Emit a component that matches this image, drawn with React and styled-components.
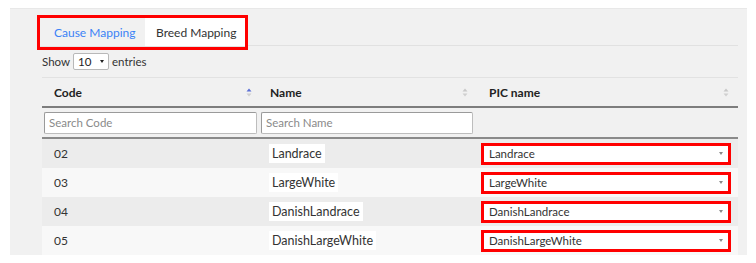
import React from "react";
import styled, { createGlobalStyle } from "styled-components";

const Global = createGlobalStyle`
  html, body { margin: 0; padding: 0; background: #ffffff; }
  body { font-family: Lato, "Open Sans", sans-serif; color: #333; }
  * { box-sizing: border-box; }
`;

const Panel = styled.div`
  margin: 8px 9px 0 10px;
  width: 737px;
  height: 247px;
  background: #f1f1f1;
  border-top: 1px solid #e8e8e8;
  padding: 6px 9px 0 32px;
  overflow: hidden;
`;

const TabBar = styled.div`
  display: flex;
  align-items: flex-start;
`;

const TabGroup = styled.div`
  display: flex;
  margin-left: -5px;
  border: 3px solid #ff0000;
  height: 35px;
`;

const Tab = styled.div`
  display: flex;
  align-items: center;
  height: 29px;
  width: ${p => p.$w}px;
  padding-left: ${p => p.$pl}px;
  font-size: 12px;
  color: ${p => (p.$active ? "#3b82f6" : "#333")};
  background: ${p => (p.$active ? "#f1f1f1" : "#ffffff")};
  border-bottom: 1px solid #e3e3e3;
`;

const BarLine = styled.div`
  flex: 1;
  height: 31px;
  border-bottom: 1px solid #e1e1e1;
`;

const LengthRow = styled.div`
  display: flex;
  align-items: center;
  gap: 3px;
  height: 17px;
  margin-top: 3px;
  font-size: 11.5px;
  color: #333;
`;

const LenSelect = styled.div`
  width: 36px;
  height: 17px;
  background: #fff;
  border: 1px solid #b8b8b8;
  border-radius: 2px;
  display: flex;
  align-items: center;
  justify-content: space-between;
  padding: 0 4px 0 4px;
  font-size: 11.5px;
  color: #222;
`;

const Caret = styled.span`
  display: inline-block;
  width: 0;
  height: 0;
  border-left: ${p => p.$s}px solid transparent;
  border-right: ${p => p.$s}px solid transparent;
  border-top: ${p => p.$s + 1}px solid ${p => p.$c};
`;

const Table = styled.div`
  margin-top: 7px;
  width: 696px;
  border-top: 1px solid #e2e2e2;
`;

const Row = styled.div`
  display: grid;
  grid-template-columns: 216px 220px 260px;
  height: ${p => p.$h}px;
  background: ${p => p.$bg || "transparent"};
  border-bottom: ${p => p.$bb || "none"};
  align-items: center;
`;

const HeadCell = styled.div`
  display: flex;
  align-items: center;
  justify-content: space-between;
  padding: 0 ${p => p.$pr}px 0 ${p => p.$pl}px;
  font-size: 12px;
  font-weight: 700;
  color: #222;
`;

const FilterCell = styled.div`
  padding-left: ${p => p.$pl}px;
`;

const SearchInput = styled.input`
  width: ${p => p.$w}px;
  height: 22px;
  border: 1px solid #bdbdbd;
  border-top-color: #9a9a9a;
  border-left-color: #9a9a9a;
  border-radius: 2px;
  background: #fff;
  padding: 0 4px;
  font-family: Lato, "Open Sans", sans-serif;
  font-size: 11.5px;
  color: #333;
  outline: none;
  &::placeholder { color: #8a8a8a; }
`;

const Cell = styled.div`
  padding-left: ${p => p.$pl}px;
  font-size: 12px;
  color: #333;
`;

const NameBox = styled.span`
  display: inline-block;
  background: #ffffff;
  padding: 2px 3px;
  font-size: 12.5px;
  color: #333;
`;

const PicSelect = styled.div`
  width: 250px;
  height: 22px;
  margin-left: 3px;
  border: 3px solid #ff0000;
  background: #fff;
  display: flex;
  align-items: center;
  justify-content: space-between;
  padding: 0 5px 0 5px;
  font-size: 11.5px;
  color: #333;
`;

const SortIcon = ({ active }) => (
  <svg width="6" height="9" viewBox="0 0 6 9">
    <path d="M3 0.5 L5.5 3.5 L0.5 3.5 Z" fill={active ? "#5b6fd6" : "#c8c8c8"} />
    <path d="M3 8.5 L5.5 5.5 L0.5 5.5 Z" fill="#d0d0d0" />
  </svg>
);

const rows = [
  { code: "02", name: "Landrace", bg: "#ececec" },
  { code: "03", name: "LargeWhite", bg: "#f8f8f8" },
  { code: "04", name: "DanishLandrace", bg: "#ececec" },
  { code: "05", name: "DanishLargeWhite", bg: "#f8f8f8" },
];

export default function App() {
  return (
    <>
      <Global />
      <Panel>
        <TabBar>
          <TabGroup>
            <Tab $active $w={105} $pl={14}>Cause Mapping</Tab>
            <Tab $w={100} $pl={11}>Breed Mapping</Tab>
          </TabGroup>
          <BarLine />
        </TabBar>
        <LengthRow>
          <span>Show</span>
          <LenSelect>
            <span>10</span>
            <Caret $s={2} $c="#222" />
          </LenSelect>
          <span>entries</span>
        </LengthRow>
        <Table>
          <Row $h={30} $bb="2px solid #7d7d7d">
            <HeadCell $pl={12} $pr={6}>Code<SortIcon active /></HeadCell>
            <HeadCell $pl={12} $pr={10}>Name<SortIcon /></HeadCell>
            <HeadCell $pl={11} $pr={9}>PIC name<SortIcon /></HeadCell>
          </Row>
          <Row $h={31} $bb="2px solid #8a8a8a">
            <FilterCell $pl={2}><SearchInput $w={213} placeholder="Search Code" /></FilterCell>
            <FilterCell $pl={3}><SearchInput $w={212} placeholder="Search Name" /></FilterCell>
            <FilterCell $pl={0} />
          </Row>
          {rows.map(r => (
            <Row key={r.code} $h={29} $bg={r.bg}>
              <Cell $pl={12}>{r.code}</Cell>
              <Cell $pl={11}><NameBox>{r.name}</NameBox></Cell>
              <Cell $pl={0}>
                <PicSelect>
                  <span>{r.name}</span>
                  <Caret $s={2.5} $c="#888" />
                </PicSelect>
              </Cell>
            </Row>
          ))}
        </Table>
      </Panel>
    </>
  );
}
